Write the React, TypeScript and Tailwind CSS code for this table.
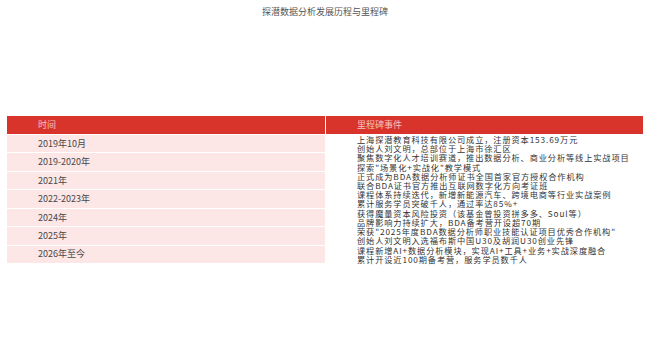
const rows: { time: string; events: [string, string] }[] = [
  { time: "2019年10月", events: ["上海探潜教育科技有限公司成立，注册资本153.69万元", "创始人刘文明，总部位于上海市徐汇区"] },
  { time: "2019-2020年", events: ["聚焦数字化人才培训赛道，推出数据分析、商业分析等线上实战项目", "探索\"场景化+实战化\"教学模式"] },
  { time: "2021年", events: ["正式成为BDA数据分析师证书全国首家官方授权合作机构", "联合BDA证书官方推出互联网数字化方向考证班"] },
  { time: "2022-2023年", events: ["课程体系持续迭代，新增新能源汽车、跨境电商等行业实战案例", "累计服务学员突破千人，通过率达85%+"] },
  { time: "2024年", events: ["获得魔量资本风险投资（该基金曾投资拼多多、Soul等）", "品牌影响力持续扩大，BDA备考营开设超70期"] },
  { time: "2025年", events: ["荣获\"2025年度BDA数据分析师职业技能认证项目优秀合作机构\"", "创始人刘文明入选福布斯中国U30及胡润U30创业先锋"] },
  { time: "2026年至今", events: ["课程新增AI+数据分析模块，实现AI+工具+业务+实战深度融合", "累计开设近100期备考营，服务学员数千人"] },
]

export default function App() {
  return (
    <div
      className="w-[650px] h-[354px] bg-white"
      style={{ fontFamily: '"Noto Sans CJK SC", "Noto Sans", sans-serif' }}
    >
      <div className="pt-[7px] text-center text-[9px] leading-[10px] text-[#555]">
        探潜数据分析发展历程与里程碑
      </div>

      <div className="ml-[7px] mt-[99px] w-[636px]">
        <div className="flex h-[18px] gap-px">
          <div className="flex w-[318px] items-center bg-[#d9342b] pl-[31px] text-[9px] text-[#f5c3bf]">
            时间
          </div>
          <div className="flex flex-1 items-center bg-[#d9342b] pl-[31px] text-[9px] text-[#f5c3bf]">
            里程碑事件
          </div>
        </div>

        <div className="mt-px">
          {rows.map((r) => (
            <div key={r.time} className="flex h-[18.43px] gap-px">
              <div className="flex w-[318px] items-center border-b border-white bg-[#fce6e6] pl-[31px] text-[9px] text-[#484848]">
                {r.time}
              </div>
              <div className="flex-1 whitespace-nowrap pl-[31px] text-[8.2px] leading-[9.2px] tracking-[0.9px] text-[#333]">
                <div>{r.events[0]}</div>
                <div>{r.events[1]}</div>
              </div>
            </div>
          ))}
        </div>
      </div>
    </div>
  )
}
